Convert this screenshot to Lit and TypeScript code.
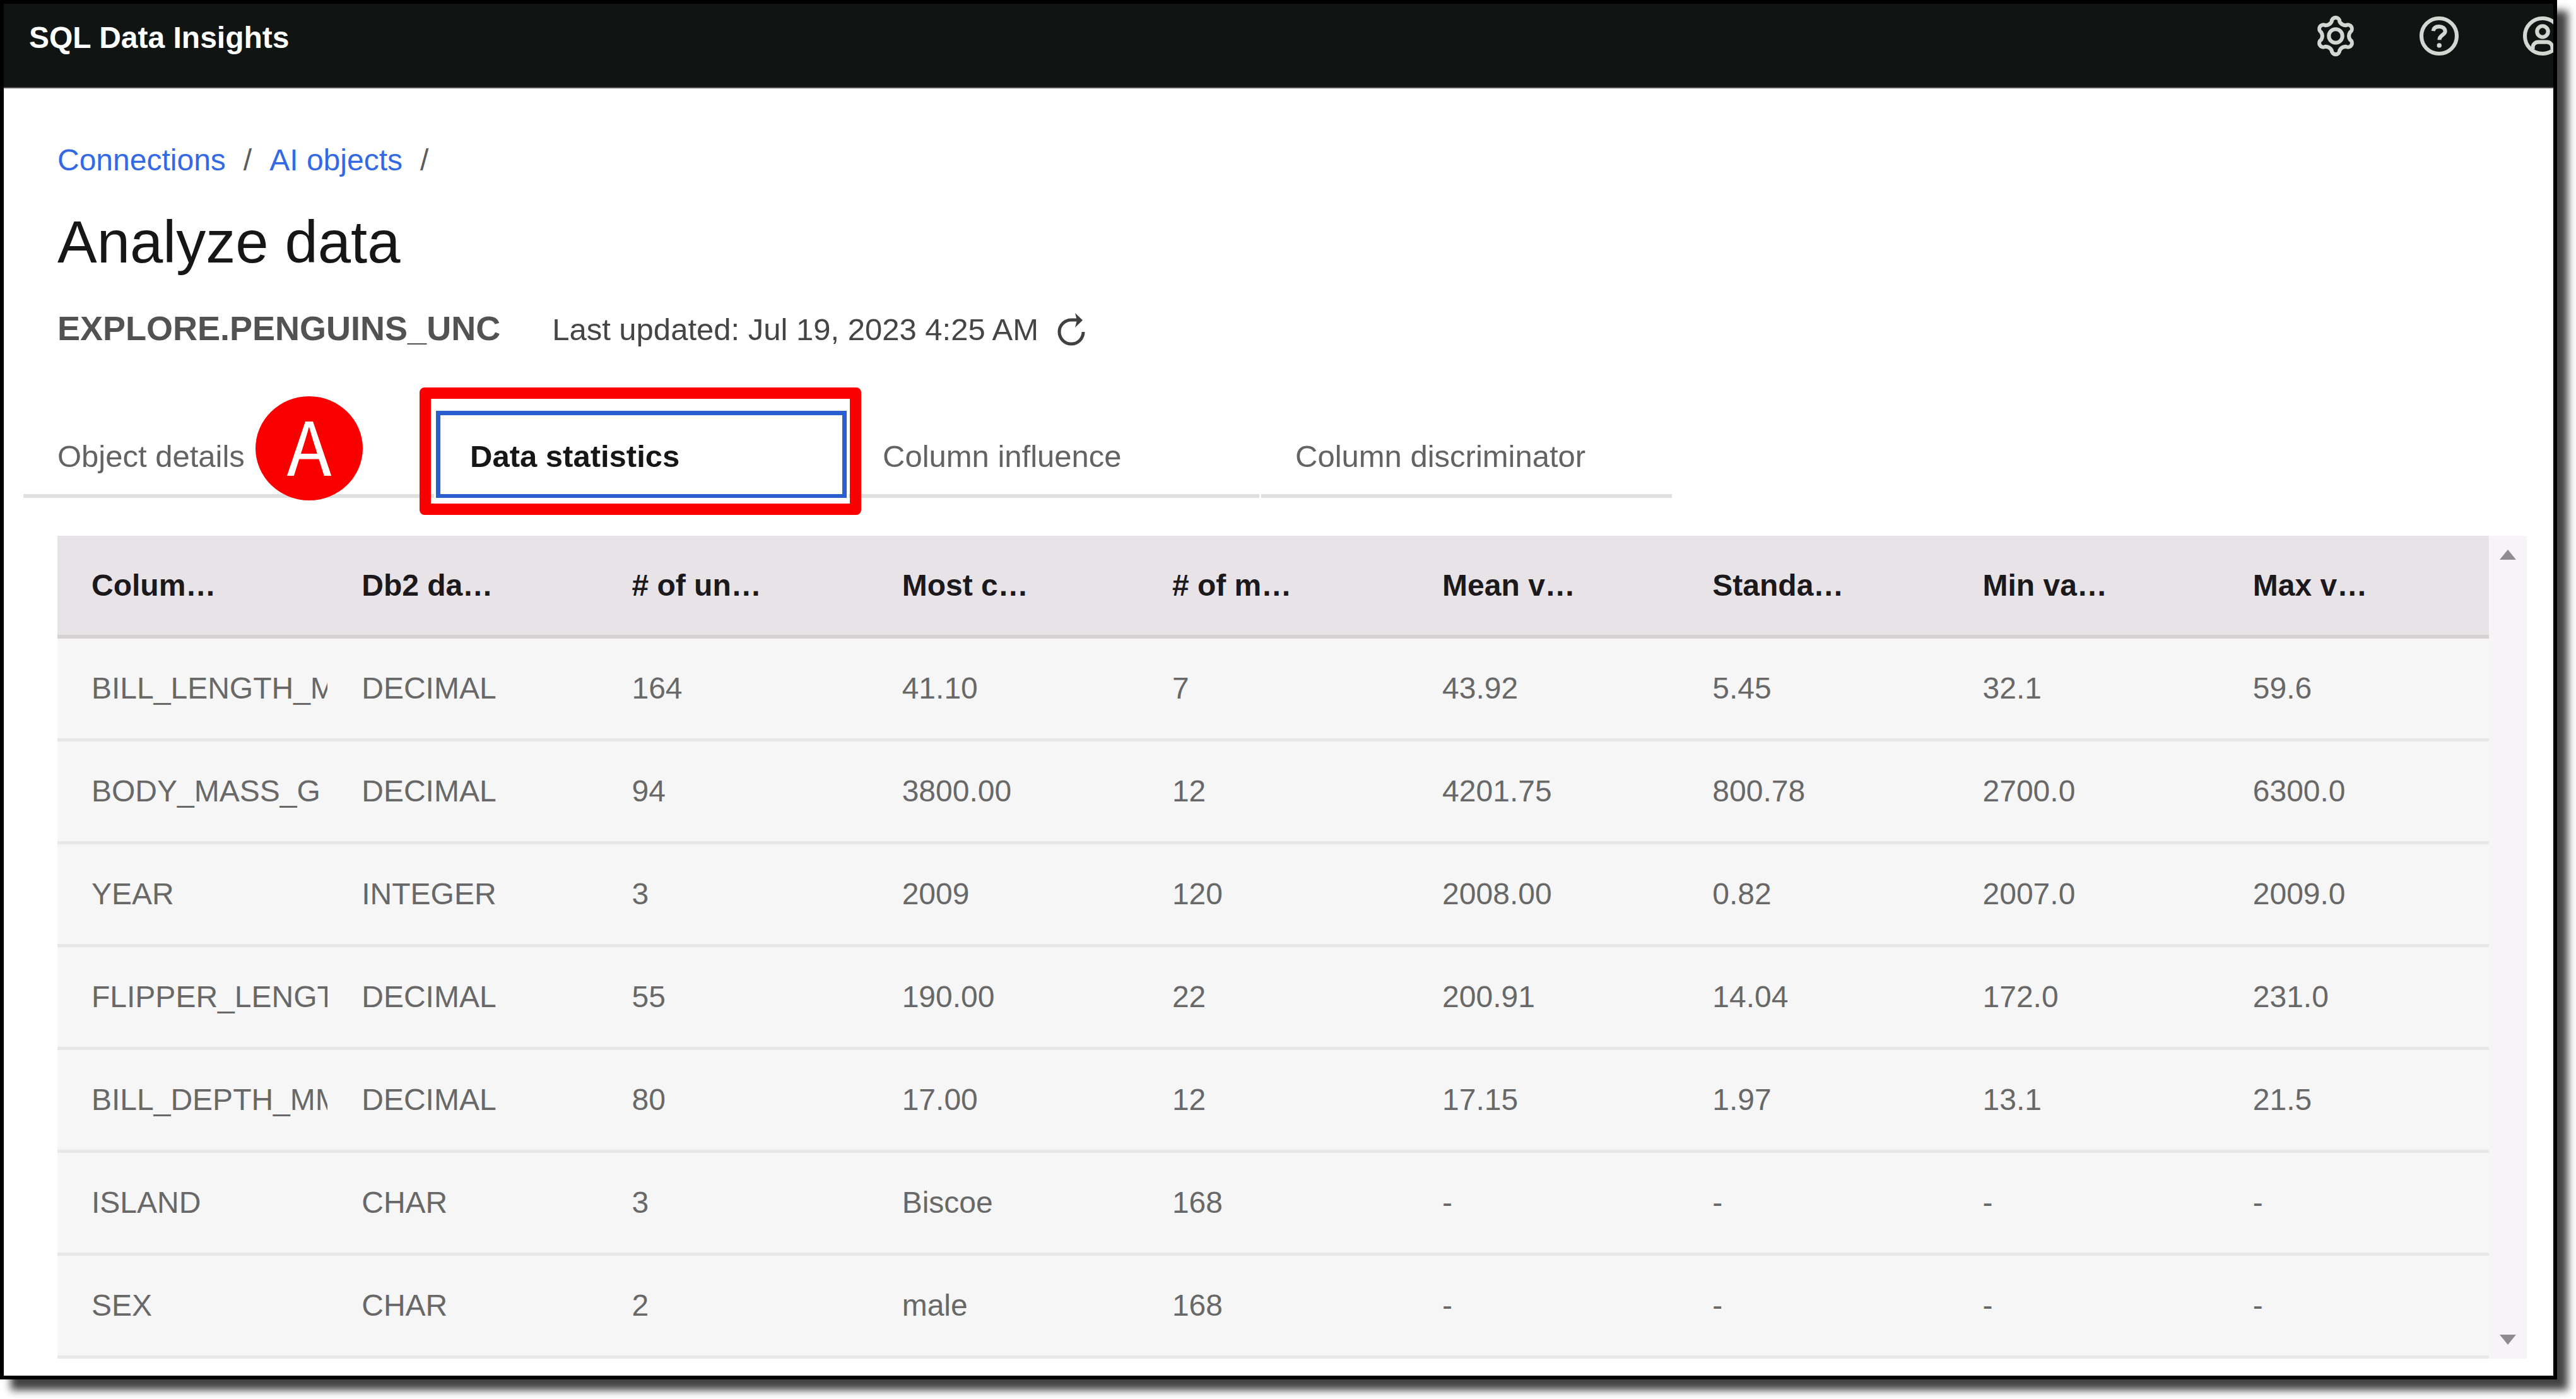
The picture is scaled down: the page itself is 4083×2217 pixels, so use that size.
import { LitElement, html, css, svg } from "lit";
import { customElement, state } from "lit/decorators.js";
import { classMap } from "lit/directives/class-map.js";

const HEADINGS = [
  "Colum…",
  "Db2 da…",
  "# of un…",
  "Most c…",
  "# of m…",
  "Mean v…",
  "Standa…",
  "Min va…",
  "Max v…",
];

const ROWS = [
  ["BILL_LENGTH_M", "DECIMAL", "164", "41.10", "7", "43.92", "5.45", "32.1", "59.6"],
  ["BODY_MASS_G", "DECIMAL", "94", "3800.00", "12", "4201.75", "800.78", "2700.0", "6300.0"],
  ["YEAR", "INTEGER", "3", "2009", "120", "2008.00", "0.82", "2007.0", "2009.0"],
  ["FLIPPER_LENGT", "DECIMAL", "55", "190.00", "22", "200.91", "14.04", "172.0", "231.0"],
  ["BILL_DEPTH_MM", "DECIMAL", "80", "17.00", "12", "17.15", "1.97", "13.1", "21.5"],
  ["ISLAND", "CHAR", "3", "Biscoe", "168", "-", "-", "-", "-"],
  ["SEX", "CHAR", "2", "male", "168", "-", "-", "-", "-"],
];

const TABS = ["Object details", "Data statistics", "Column influence", "Column discriminator"];

/** Outline of a six-toothed gear with round teeth, centred on 16,16. */
function gearPath(): string {
  const at = (deg: number, radial: number, tangential: number) => {
    const a = (deg * Math.PI) / 180;
    const x = 16 + radial * Math.cos(a) - tangential * Math.sin(a);
    const y = 16 + radial * Math.sin(a) + tangential * Math.cos(a);
    return `${x.toFixed(2)} ${y.toFixed(2)}`;
  };
  let d = `M${at(-90, 10.4, -2.9)}`;
  for (let i = 0; i < 6; i++) {
    const deg = -90 + i * 60;
    d += `A2.9 2.9 0 0 1 ${at(deg, 10.4, 2.9)}`;
    d += `Q${at(deg + 30, 8.8, 0)} ${at(deg + 60, 10.4, -2.9)}`;
  }
  return d + "Z";
}

const ICONS = {
  settings: svg`<path d=${gearPath()} /><circle cx="16" cy="16" r="4.9" />`,
  help: svg`<circle cx="16" cy="16" r="12.8" />
    <path d="M11.7 12.4C12 10.2 13.7 9.2 16 9.2C18.6 9.2 20.4 10.5 20.4 12.7C20.4 15.2 16.2 15.3 16.2 18.8" />
    <circle class="dot" cx="16.1" cy="22.8" r="1.7" />`,
  user: svg`<circle cx="16" cy="16" r="12.8" /><circle cx="16" cy="12.8" r="4" />
    <path d="M8.9 25.6V24.4A4 4 0 0 1 12.9 20.4H19.1A4 4 0 0 1 23.1 24.4V25.6" />`,
};

@customElement("app-header")
export class AppHeader extends LitElement {
  static styles = css`
    :host {
      display: block;
    }
    .bar {
      display: flex;
      align-items: flex-start;
      justify-content: space-between;
      height: 132px;
      overflow: hidden;
      background: #101412;
      border-bottom: 2px solid #55525a;
    }
    .name {
      margin: 0;
      padding-left: 40px;
      font-size: 48px;
      line-height: 108px;
      font-weight: 700;
      color: #fff;
    }
    .actions {
      display: flex;
      margin-right: -65px;
    }
    .action {
      display: flex;
      align-items: center;
      justify-content: center;
      width: 164px;
      height: 102px;
      padding: 0;
      border: 0;
      background: none;
    }
    .icon {
      width: 70px;
      height: 70px;
      fill: none;
      stroke: #d3d6d1;
      stroke-width: 2.8;
      stroke-linejoin: round;
    }
    .dot {
      fill: #d3d6d1;
      stroke: none;
    }
  `;

  render() {
    return html`<header class="bar">
      <p class="name">SQL Data Insights</p>
      <div class="actions">
        <button class="action" aria-label="Settings">
          <svg class="icon" viewBox="0 0 32 32">${ICONS.settings}</svg>
        </button>
        <button class="action" aria-label="Help">
          <svg class="icon" viewBox="0 0 32 32">${ICONS.help}</svg>
        </button>
        <button class="action" aria-label="User">
          <svg class="icon" viewBox="0 0 32 32">${ICONS.user}</svg>
        </button>
      </div>
    </header>`;
  }
}

@customElement("stats-table")
export class StatsTable extends LitElement {
  static styles = css`
    :host {
      display: flex;
    }
    .body {
      flex: 1;
      min-width: 0;
    }
    .table {
      width: 100%;
      table-layout: fixed;
      border-collapse: separate;
      border-spacing: 0;
      font-size: 48px;
      line-height: 60px;
    }
    .head,
    .cell {
      box-sizing: border-box;
      height: 163px;
      padding: 0 0 0 54px;
      text-align: left;
      vertical-align: middle;
      white-space: nowrap;
      overflow: hidden;
    }
    .head {
      background: #e7e3e6;
      border-bottom: 6px solid #d5d0d2;
      color: #1b191c;
      font-weight: 700;
    }
    .cell {
      background: #f6f6f6;
      border-bottom: 5px solid #e8e8e8;
      color: #686868;
    }
    .scrollbar {
      display: flex;
      flex-direction: column;
      justify-content: space-between;
      align-items: center;
      width: 60px;
      background: #f6f4f7;
    }
    .step {
      display: flex;
      padding: 22px 0;
      border: 0;
      background: none;
    }
    .arrow {
      width: 26px;
      height: 16px;
      fill: #8f8b90;
    }
  `;

  render() {
    return html`
      <div class="body">
        <table class="table">
          <thead>
            <tr>
              ${HEADINGS.map((h) => html`<th class="head" scope="col">${h}</th>`)}
            </tr>
          </thead>
          <tbody>
            ${ROWS.map((row) => html`<tr>${row.map((c) => html`<td class="cell">${c}</td>`)}</tr>`)}
          </tbody>
        </table>
      </div>
      <div class="scrollbar">
        <button class="step" aria-label="Scroll up">
          <svg class="arrow" viewBox="0 0 26 16"><path d="M0 16L13 0L26 16Z" /></svg>
        </button>
        <button class="step" aria-label="Scroll down">
          <svg class="arrow" viewBox="0 0 26 16"><path d="M0 0H26L13 16Z" /></svg>
        </button>
      </div>
    `;
  }
}

@customElement("app-root")
export class AppRoot extends LitElement {
  @state() private selected = 1;

  static styles = css`
    :host {
      display: flow-root;
      background: #fff;
      font-family: "Liberation Sans", Arial, sans-serif;
    }
    .frame {
      margin: 0 30px 30px 0;
      border: 6px solid #000;
      background: #fff;
      box-shadow: 17px 17px 12px rgba(0, 0, 0, 0.74);
    }
    .main {
      padding: 82px 42px 27px 85px;
    }
    .crumbs {
      display: flex;
      gap: 28px;
      font-size: 48px;
      line-height: 64px;
      color: #5c5c5c;
    }
    .link {
      color: #3469e6;
      text-decoration: none;
    }
    .title {
      margin: 38px 0 44px;
      font-size: 94px;
      line-height: 120px;
      font-weight: 400;
      color: #161616;
    }
    .summary {
      display: flex;
      align-items: baseline;
      gap: 82px;
      height: 64px;
      line-height: 64px;
    }
    .object {
      margin: 0;
      font-size: 54px;
      font-weight: 700;
      color: #525252;
    }
    .updated {
      display: flex;
      align-items: center;
      gap: 24px;
      font-size: 49px;
      color: #454545;
    }
    .refresh {
      display: flex;
      padding: 0;
      border: 0;
      background: none;
    }
    .refresh-icon {
      width: 56px;
      height: 56px;
      fill: none;
      stroke: #404040;
      stroke-width: 5;
    }
    .head {
      fill: #404040;
      stroke: none;
    }
    .tabs {
      position: relative;
      display: flex;
      gap: 3px;
      margin: 99px 0 60px -54px;
    }
    .tab {
      position: relative;
      box-sizing: border-box;
      width: 651px;
      height: 138px;
      padding: 12px 0 0 54px;
      border: 0;
      border-bottom: 6px solid #dfdfdf;
      background: none;
      font: 400 49px/60px "Liberation Sans", Arial, sans-serif;
      text-align: left;
      color: #636363;
    }
    .selected {
      border-color: #2a5fd0;
      box-shadow: inset 0 7px #2a5fd0, inset 7px 0 #2a5fd0, inset -7px 0 #2a5fd0;
      font-weight: 700;
      color: #161616;
    }
    .highlight {
      position: absolute;
      z-index: 1;
      inset: -37px -23px -33px -26px;
      border: 18px solid #fb0000;
      border-radius: 8px;
      pointer-events: none;
    }
    .marker {
      position: absolute;
      left: 368px;
      top: -23px;
      width: 170px;
      height: 165px;
      border-radius: 50%;
      background: #fb0000;
      color: #fff;
      font-family: "Noto Sans CJK SC", sans-serif;
      font-size: 117px;
      line-height: 150px;
      text-align: center;
    }
  `;

  render() {
    return html`<div class="frame">
      <app-header></app-header>
      <main class="main">
        <nav class="crumbs">
          <a class="link" href="#connections">Connections</a><span>/</span>
          <a class="link" href="#objects">AI objects</a><span>/</span>
        </nav>
        <h1 class="title">Analyze data</h1>
        <div class="summary">
          <h2 class="object">EXPLORE.PENGUINS_UNC</h2>
          <div class="updated">
            <span>Last updated: Jul 19, 2023 4:25 AM</span>
            <button class="refresh" aria-label="Refresh">
              <svg class="refresh-icon" viewBox="0 0 56 56">
                <path d="M47 32A19 19 0 1 1 28 13H38" />
                <path class="head" d="M34 2L46 13.5L34 25L37 13.5Z" />
              </svg>
            </button>
          </div>
        </div>
        <div class="tabs" role="tablist">
          ${TABS.map(
            (label, i) => html`<button
              class=${classMap({ tab: true, selected: i === this.selected })}
              role="tab"
              aria-selected=${i === this.selected ? "true" : "false"}
              @click=${() => (this.selected = i)}
            >
              ${label}${i === 1 ? html`<span class="highlight"></span>` : null}
            </button>`
          )}
          <span class="marker">A</span>
        </div>
        <stats-table></stats-table>
      </main>
    </div>`;
  }
}
